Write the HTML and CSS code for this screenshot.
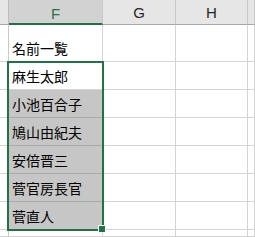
FILE: index.html
```html
<!DOCTYPE html>
<html lang="ja">
<head>
    <meta charset="UTF-8">
    <title>Sheet</title>
    <link rel="stylesheet" href="styles.css">
</head>
<body>
<div class="sheet">
    <div class="grid">
        <!-- column headers -->
        <div class="hd corner"></div>
        <div class="hd hd-active">F</div>
        <div class="hd">G</div>
        <div class="hd">H</div>
        <div class="hd"></div>

        <!-- rows -->
        <div class="c side"></div><div class="c">名前一覧</div><div class="c"></div><div class="c"></div><div class="c"></div>
        <div class="c side"></div><div class="c">麻生太郎</div><div class="c"></div><div class="c"></div><div class="c"></div>
        <div class="c side"></div><div class="c sel">小池百合子</div><div class="c"></div><div class="c"></div><div class="c"></div>
        <div class="c side"></div><div class="c sel">鳩山由紀夫</div><div class="c"></div><div class="c"></div><div class="c"></div>
        <div class="c side"></div><div class="c sel">安倍晋三</div><div class="c"></div><div class="c"></div><div class="c"></div>
        <div class="c side"></div><div class="c sel">菅官房長官</div><div class="c"></div><div class="c"></div><div class="c"></div>
        <div class="c side"></div><div class="c sel">菅直人</div><div class="c"></div><div class="c"></div><div class="c"></div>
        <div class="c side"></div><div class="c"></div><div class="c"></div><div class="c"></div><div class="c"></div>
    </div>

    <!-- selection frame + fill handle -->
    <div class="selection"></div>
    <div class="handle"></div>
</div>
</body>
</html>
```

FILE: styles.css
```css
body {
    margin: 0;
    background: #fff;
    font-family: "Noto Sans CJK JP", "Liberation Sans", sans-serif;
}

.sheet {
    position: relative;
    width: 255px;
    height: 237px;
    overflow: hidden;
}

.grid {
    display: grid;
    grid-template-columns: 9px 94px 73px 72px 1fr;
    grid-template-rows: 25px 37px repeat(6, 28px) 1fr;
    height: 237px;
}

.hd {
    box-sizing: border-box;
    background: #e6e6e6;
    border-right: 1px solid #c9c9c9;
    border-bottom: 1px solid #a8a8a8;
    font-family: "Liberation Sans", "DejaVu Sans", sans-serif;
    font-size: 15px;
    color: #262626;
    display: flex;
    align-items: center;
    justify-content: center;
    padding-top: 1px;
}

.hd.corner {
    border-right: 1px solid #bdbdbd;
}

.hd-active {
    background: #d2d2d2;
    color: #217346;
    border-bottom: 2px solid #217346;
    padding-top: 3px;
}

.c {
    box-sizing: border-box;
    border-right: 1px solid #d4d4d4;
    border-bottom: 1px solid #d4d4d4;
    font-size: 14px;
    line-height: 1;
    color: #000;
    white-space: nowrap;
    display: flex;
    align-items: flex-end;
    padding: 0 0 6px 3px;
}

.c.side {
    padding: 0;
    border-right-color: #c9c9c9;
}

.c.sel {
    background: #c6c6c6;
    border-bottom-color: #a9a9a9;
}

.selection {
    position: absolute;
    left: 7px;
    top: 61px;
    width: 93px;
    height: 166px;
    border: 2px solid #217346;
}

.handle {
    position: absolute;
    left: 98px;
    top: 225px;
    width: 6px;
    height: 6px;
    background: #217346;
    border: 1px solid #fff;
}
```
